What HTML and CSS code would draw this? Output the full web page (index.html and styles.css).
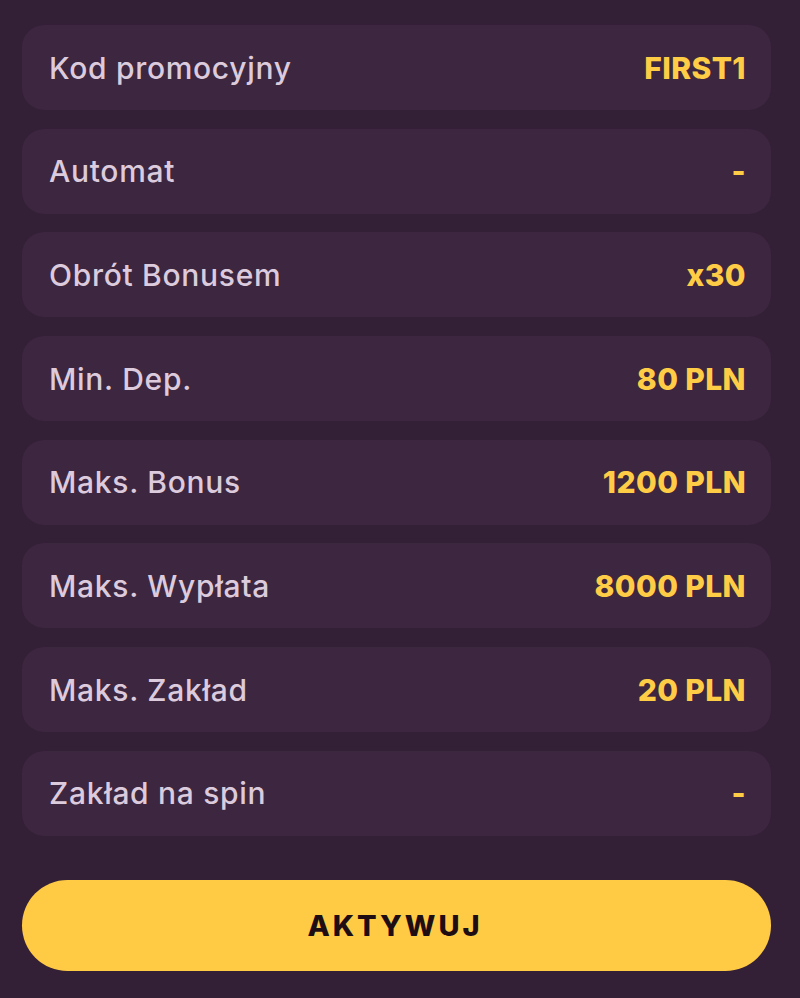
FILE: index.html
```html
<!DOCTYPE html>
<html lang="pl">
<head>
    <meta charset="UTF-8">
    <meta name="viewport" content="width=device-width, initial-scale=1.0">
    <title>Bonus</title>
    <link rel="stylesheet" href="styles.css">
</head>
<body>
    <div class="bonus">
        <ul class="details">
            <li><span class="label">Kod promocyjny</span><span class="value">FIRST1</span></li>
            <li><span class="label">Automat</span><span class="value">-</span></li>
            <li><span class="label">Obrót Bonusem</span><span class="value">x30</span></li>
            <li><span class="label">Min. Dep.</span><span class="value">80 PLN</span></li>
            <li><span class="label">Maks. Bonus</span><span class="value">1200 PLN</span></li>
            <li><span class="label">Maks. Wypłata</span><span class="value">8000 PLN</span></li>
            <li><span class="label">Maks. Zakład</span><span class="value">20 PLN</span></li>
            <li><span class="label">Zakład na spin</span><span class="value">-</span></li>
        </ul>
        <button class="activate">AKTYWUJ</button>
    </div>
</body>
</html>
```

FILE: styles.css
```css
body {
    background-color: #331f36;
    margin: 0;
    padding: 0;
    font-family: 'Inter', 'Noto Sans', sans-serif;
}

.bonus {
    padding: 25px 29px 0 22px;
}

.details {
    list-style-type: none;
    margin: 0;
    padding: 0;
    display: flex;
    flex-direction: column;
    gap: 18.7px;
}

.details li {
    display: flex;
    justify-content: space-between;
    align-items: center;
    height: 85px;
    padding: 0 25px 0 27px;
    background-color: #3d2640;
    border-radius: 22px;
}

.label {
    color: #dccbdc;
    font-size: 30px;
    font-weight: 500;
    letter-spacing: 0.7px;
}

.value {
    color: #ffcc45;
    font-size: 30px;
    font-weight: 800;
    letter-spacing: 0.4px;
}

.activate {
    display: block;
    width: 100%;
    height: 91px;
    margin-top: 44px;
    padding-left: 3px;
    background-color: #ffcb45;
    color: #1e0e14;
    border: none;
    border-radius: 46px;
    font-family: inherit;
    font-size: 29px;
    font-weight: 800;
    letter-spacing: 3px;
    cursor: pointer;
}
```
